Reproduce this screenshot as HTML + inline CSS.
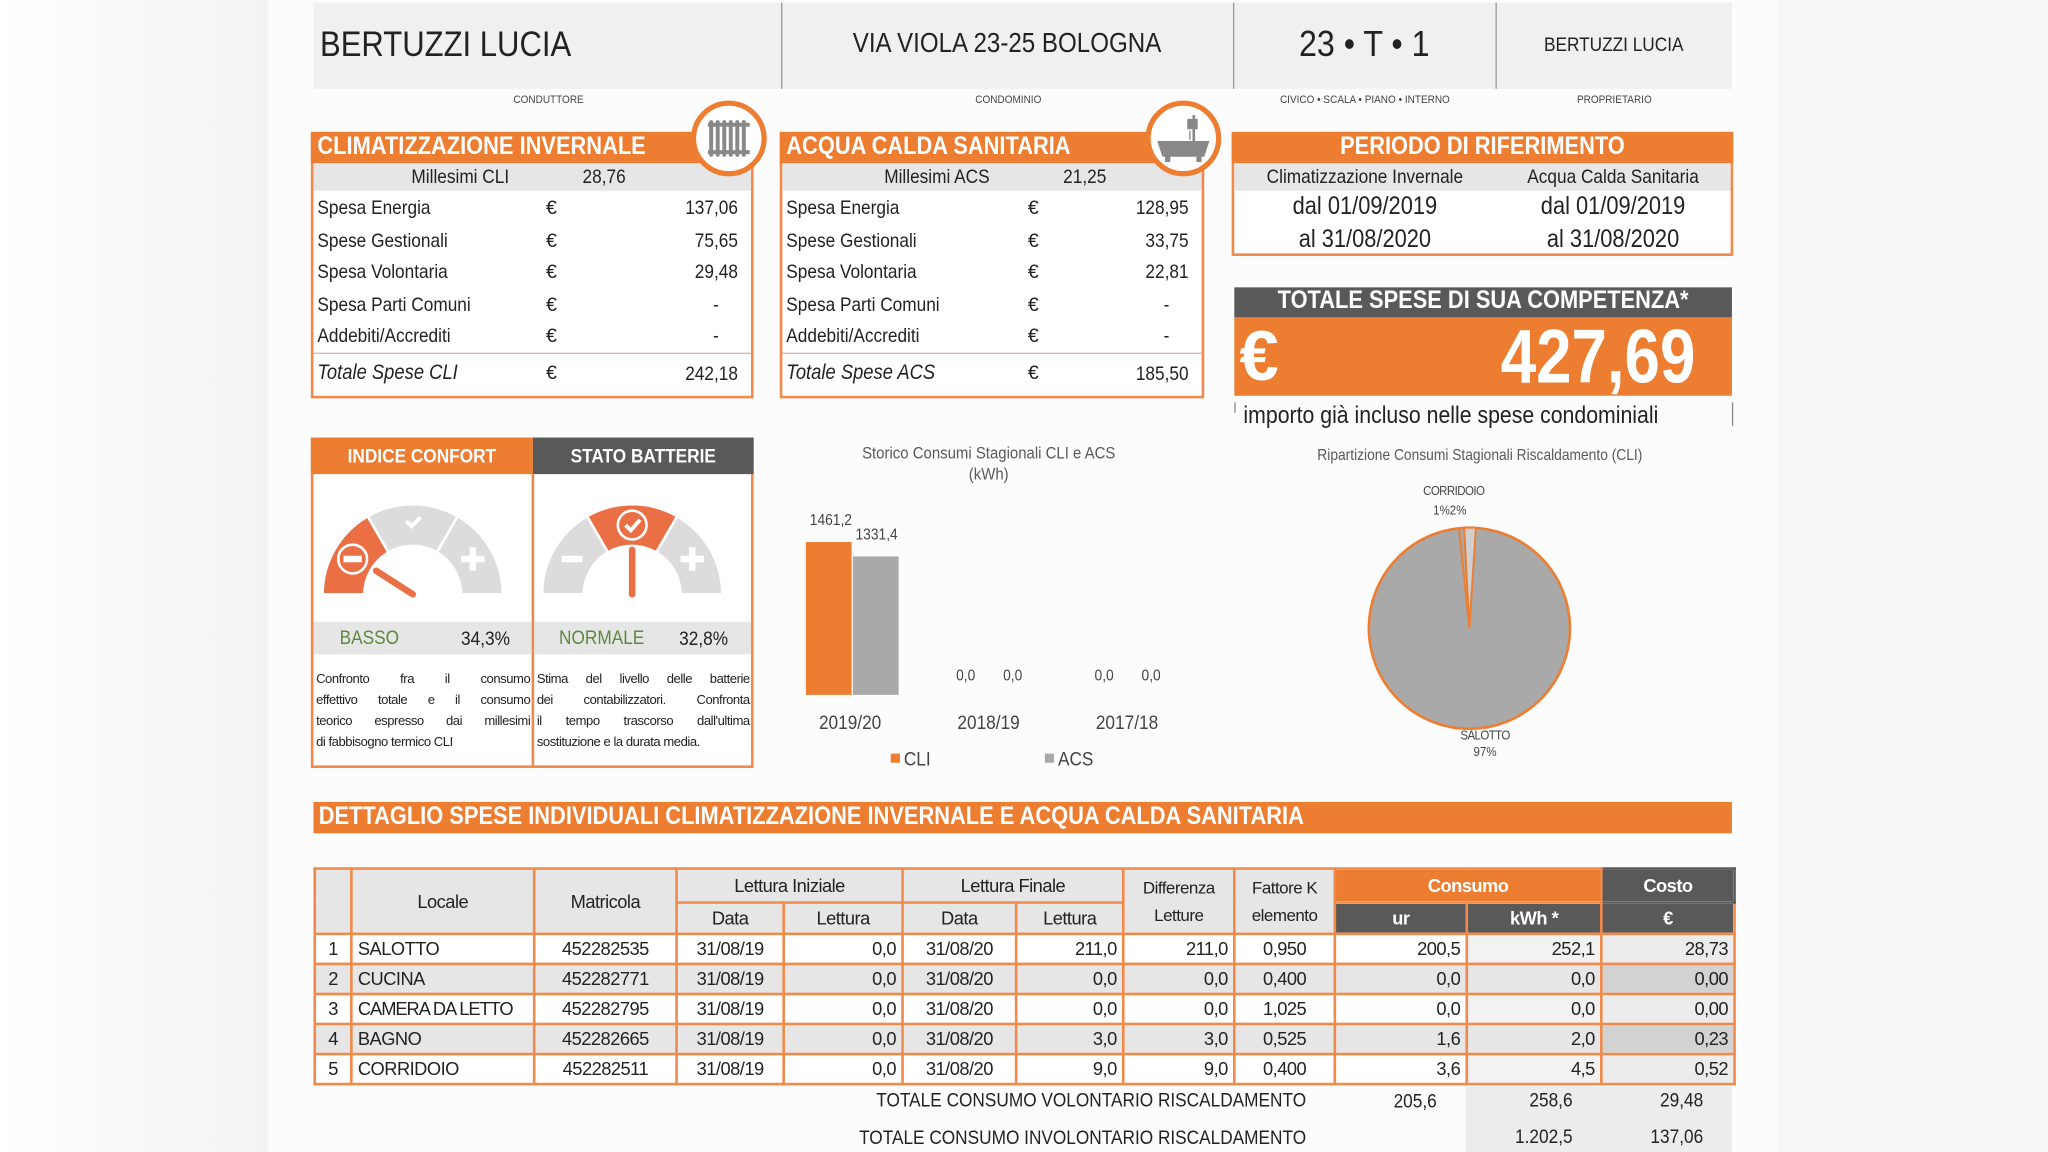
<!DOCTYPE html>
<html><head><meta charset="utf-8"><style>
*{margin:0;padding:0;box-sizing:border-box}
html,body{width:2048px;height:1152px;overflow:hidden;background:#fff}
#s{position:absolute;left:0;top:0;width:1568px;height:882px;transform:scale(1.306122);transform-origin:0 0;font-family:"Liberation Sans Narrow","Liberation Sans",sans-serif;color:#222;background:linear-gradient(90deg,#fff 0,#f3f3f3 205px,#fcfcfc 206px,#fcfcfc 1360px,#f6f6f6 1361px)}
.a{position:absolute;white-space:nowrap}
.c{text-align:center}
.r{text-align:right}
.t{transform:scaleX(.88);transform-origin:0 50%}
.tc{transform:scaleX(.88);transform-origin:50% 50%}
.tr{transform:scaleX(.88);transform-origin:100% 50%}
.or{background:#ed7d31}
.dk{background:#595959}
.w{color:#fff;font-weight:bold}
.box{position:absolute;border:2px solid #f08a4b;background:#fff}
.lab{font-size:8.5px;color:#444;width:200px;text-align:center;transform:scaleX(.9)}
.desc{position:absolute;font-size:10px;line-height:16px;letter-spacing:-0.35px}
.desc div{white-space:nowrap;text-align:justify;text-align-last:justify}
.desc div.l{text-align-last:left}
table{border-collapse:collapse;position:absolute;left:240px;top:664px;font-size:14px;table-layout:fixed;width:1087px;letter-spacing:-0.4px}
td{border:2px solid #f08a4b;height:23px;line-height:19px;padding:0 4px;white-space:nowrap;overflow:hidden}
</style></head><body><div id="s">
<div class="a" style="left:240px;top:2px;width:1086px;height:66px;background:#f0f0f0"></div>
<div class="a" style="left:598px;top:2px;width:1px;height:66px;background:#999"></div>
<div class="a" style="left:944px;top:2px;width:1px;height:66px;background:#999"></div>
<div class="a" style="left:1145px;top:2px;width:1px;height:66px;background:#999"></div>
<div class="a t" style="left:245px;top:19px;font-size:27px">BERTUZZI LUCIA</div>
<div class="a c tc" style="left:598px;top:22px;width:346px;font-size:21px">VIA VIOLA 23-25 BOLOGNA</div>
<div class="a c tc" style="left:944px;top:18px;width:201px;font-size:28px">23 • T • 1</div>
<div class="a c tc" style="left:1145px;top:26px;width:181px;font-size:15px">BERTUZZI LUCIA</div>
<div class="a lab" style="left:320px;top:71px">CONDUTTORE</div>
<div class="a lab" style="left:672px;top:71px">CONDOMINIO</div>
<div class="a lab" style="left:945px;top:71px">CIVICO • SCALA • PIANO • INTERNO</div>
<div class="a lab" style="left:1136px;top:71px">PROPRIETARIO</div>

<div class="box" style="left:238px;top:101px;width:339px;height:204px"></div>
<div class="a or" style="left:238px;top:101px;width:339px;height:24px"></div>
<div class="a w t" style="left:243px;top:102px;font-size:19px">CLIMATIZZAZIONE INVERNALE</div>
<div class="a" style="left:240px;top:125px;width:335px;height:21px;background:#e6e6e6"></div>
<div class="a t" style="left:315px;top:127px;font-size:15px">Millesimi CLI</div>
<div class="a t" style="left:446px;top:127px;font-size:15px">28,76</div>
<div class="a t" style="left:243px;top:148px;font-size:15px;line-height:24.5px">Spesa Energia<br>Spese Gestionali<br>Spesa Volontaria<br>Spesa Parti Comuni<br>Addebiti/Accrediti</div>
<div class="a" style="left:418px;top:148px;font-size:15px;line-height:24.5px">€<br>€<br>€<br>€<br>€</div>
<div class="a r tr" style="left:465px;top:148px;width:100px;font-size:15px;line-height:24.5px">137,06<br>75,65<br>29,48<br>-&nbsp;&nbsp;&nbsp;&nbsp;<br>-&nbsp;&nbsp;&nbsp;&nbsp;</div>
<div class="a" style="left:240px;top:270px;width:335px;height:1px;background:#e0b0a0"></div>
<div class="a t" style="left:243px;top:277px;font-size:16px;font-style:italic">Totale Spese CLI</div>
<div class="a" style="left:418px;top:277px;font-size:15px">€</div>
<div class="a r tr" style="left:465px;top:278px;width:100px;font-size:15px">242,18</div>
<svg class="a" style="left:527px;top:75px" width="62" height="62" viewBox="0 0 62 62"><circle cx="31" cy="31" r="27" fill="#fff" stroke="#ed7d31" stroke-width="4"/><g fill="#888"><rect x="15" y="19" width="32" height="3"/><rect x="15" y="40" width="32" height="3"/><rect x="16" y="17" width="3" height="28" rx="1.5"/><rect x="21" y="17" width="3" height="28" rx="1.5"/><rect x="26" y="17" width="3" height="28" rx="1.5"/><rect x="31" y="17" width="3" height="28" rx="1.5"/><rect x="36" y="17" width="3" height="28" rx="1.5"/><rect x="41" y="17" width="3" height="28" rx="1.5"/></g></svg>

<div class="box" style="left:597px;top:101px;width:325px;height:204px"></div>
<div class="a or" style="left:597px;top:101px;width:325px;height:24px"></div>
<div class="a w t" style="left:602px;top:102px;font-size:19px">ACQUA CALDA SANITARIA</div>
<div class="a" style="left:599px;top:125px;width:321px;height:21px;background:#e6e6e6"></div>
<div class="a t" style="left:677px;top:127px;font-size:15px">Millesimi ACS</div>
<div class="a t" style="left:814px;top:127px;font-size:15px">21,25</div>
<div class="a t" style="left:602px;top:148px;font-size:15px;line-height:24.5px">Spesa Energia<br>Spese Gestionali<br>Spesa Volontaria<br>Spesa Parti Comuni<br>Addebiti/Accrediti</div>
<div class="a" style="left:787px;top:148px;font-size:15px;line-height:24.5px">€<br>€<br>€<br>€<br>€</div>
<div class="a r tr" style="left:810px;top:148px;width:100px;font-size:15px;line-height:24.5px">128,95<br>33,75<br>22,81<br>-&nbsp;&nbsp;&nbsp;&nbsp;<br>-&nbsp;&nbsp;&nbsp;&nbsp;</div>
<div class="a" style="left:599px;top:270px;width:321px;height:1px;background:#e0b0a0"></div>
<div class="a t" style="left:602px;top:277px;font-size:16px;font-style:italic">Totale Spese ACS</div>
<div class="a" style="left:787px;top:277px;font-size:15px">€</div>
<div class="a r tr" style="left:810px;top:278px;width:100px;font-size:15px">185,50</div>
<svg class="a" style="left:875px;top:75px" width="62" height="62" viewBox="0 0 62 62"><circle cx="31" cy="31" r="27" fill="#fff" stroke="#ed7d31" stroke-width="4"/><g fill="#888"><path d="M11 33 H51 L47 45 H15 Z"/><rect x="17" y="44" width="4" height="5"/><rect x="41" y="44" width="4" height="5"/><rect x="38" y="13" width="2" height="22"/><path d="M34 16 h8 v8 h-8z"/></g><g stroke="#888" stroke-width="1"><line x1="36" y1="25" x2="36" y2="32"/><line x1="39" y1="25" x2="39" y2="32"/></g></svg>

<div class="box" style="left:943px;top:101px;width:384px;height:95px"></div>
<div class="a or" style="left:943px;top:101px;width:384px;height:24px"></div>
<div class="a w c tc" style="left:943px;top:102px;width:384px;font-size:19px">PERIODO DI RIFERIMENTO</div>
<div class="a" style="left:945px;top:125px;width:380px;height:21px;background:#e6e6e6"></div>
<div class="a c tc" style="left:945px;top:127px;width:200px;font-size:15px">Climatizzazione Invernale</div>
<div class="a c tc" style="left:1135px;top:127px;width:200px;font-size:15px">Acqua Calda Sanitaria</div>
<div class="a c tc" style="left:945px;top:146px;width:200px;font-size:19px;line-height:25px">dal 01/09/2019<br>al 31/08/2020</div>
<div class="a c tc" style="left:1135px;top:146px;width:200px;font-size:19px;line-height:25px">dal 01/09/2019<br>al 31/08/2020</div>

<div class="a dk" style="left:945px;top:220px;width:381px;height:23px"></div>
<div class="a w c tc" style="left:945px;top:220px;width:381px;font-size:19px">TOTALE SPESE DI SUA COMPETENZA*</div>
<div class="a or" style="left:945px;top:243px;width:381px;height:60px"></div>
<div class="a w" style="left:949px;top:242px;font-size:54px">€</div>
<div class="a w r" style="left:1050px;top:240px;width:248px;font-size:58px;transform:scaleX(.84);transform-origin:100% 50%">427,69</div>
<div class="a" style="left:945px;top:308px;width:1px;height:8px;background:#888"></div>
<div class="a t" style="left:952px;top:307px;font-size:18.5px">importo già incluso nelle spese condominiali</div>
<div class="a" style="left:1326px;top:308px;width:1px;height:18px;background:#888"></div>

<div class="box" style="left:238px;top:335px;width:339px;height:253px"></div>
<div class="a or" style="left:238px;top:335px;width:170px;height:28px"></div>
<div class="a dk" style="left:408px;top:335px;width:169px;height:28px"></div>
<div class="a w c tc" style="left:238px;top:341px;width:170px;font-size:15px">INDICE CONFORT</div>
<div class="a w c tc" style="left:408px;top:341px;width:169px;font-size:15px">STATO BATTERIE</div>
<div class="a" style="left:407px;top:363px;width:2px;height:225px;background:#f08a4b"></div>
<div class="a" style="left:240px;top:476px;width:167px;height:25px;background:#e6e6e6"></div>
<div class="a" style="left:409px;top:476px;width:166px;height:25px;background:#e6e6e6"></div>
<div class="a t" style="left:260px;top:480px;font-size:15px;color:#5b8a3c">BASSO</div>
<div class="a t" style="left:353px;top:481px;font-size:15px">34,3%</div>
<div class="a t" style="left:428px;top:480px;font-size:15px;color:#5b8a3c">NORMALE</div>
<div class="a t" style="left:520px;top:481px;font-size:15px">32,8%</div>
<svg class="a" style="left:236px;top:375px" width="160" height="90" viewBox="-80 -80 160 90">
<g stroke="#fff" stroke-width="2">
<path d="M-69 0 A69 69 0 0 1 -34.5 -59.76 L-18.5 -32.04 A37 37 0 0 0 -37 0Z" fill="#ea6f45"/>
<path d="M-34.5 -59.76 A69 69 0 0 1 34.5 -59.76 L18.5 -32.04 A37 37 0 0 0 -18.5 -32.04Z" fill="#dcdcdc"/>
<path d="M34.5 -59.76 A69 69 0 0 1 69 0 L37 0 A37 37 0 0 0 18.5 -32.04Z" fill="#dcdcdc"/></g>
<circle cx="-46" cy="-27" r="11" fill="none" stroke="#fff" stroke-width="2"/><rect x="-53" y="-29.5" width="14" height="5" fill="#fff"/>
<path d="M-5 -56 L-1 -52 L6 -59" fill="none" stroke="#fff" stroke-width="3"/>
<path d="M46 -36 V-18 M37 -27 H55" stroke="#fff" stroke-width="5"/>
<line x1="-28" y1="-18" x2="0" y2="0" stroke="#ea6f45" stroke-width="5" stroke-linecap="round"/>
</svg>
<svg class="a" style="left:404px;top:375px" width="160" height="90" viewBox="-80 -80 160 90">
<g stroke="#fff" stroke-width="2">
<path d="M-69 0 A69 69 0 0 1 -34.5 -59.76 L-18.5 -32.04 A37 37 0 0 0 -37 0Z" fill="#dcdcdc"/>
<path d="M-34.5 -59.76 A69 69 0 0 1 34.5 -59.76 L18.5 -32.04 A37 37 0 0 0 -18.5 -32.04Z" fill="#ea6f45"/>
<path d="M34.5 -59.76 A69 69 0 0 1 69 0 L37 0 A37 37 0 0 0 18.5 -32.04Z" fill="#dcdcdc"/></g>
<circle cx="0" cy="-53" r="11" fill="none" stroke="#fff" stroke-width="2"/>
<path d="M-5 -53 L-1 -49 L6 -57" fill="none" stroke="#fff" stroke-width="3"/>
<path d="M-54 -27 H-38" stroke="#fff" stroke-width="5"/>
<path d="M46 -36 V-18 M37 -27 H55" stroke="#fff" stroke-width="5"/>
<line x1="0" y1="-34" x2="0" y2="0" stroke="#ea6f45" stroke-width="5" stroke-linecap="round"/>
</svg>
<div class="desc" style="left:242px;top:513px;width:164px"><div>Confronto fra il consumo</div><div>effettivo totale e il consumo</div><div>teorico espresso dai millesimi</div><div class="l">di fabbisogno termico CLI</div></div>
<div class="desc" style="left:411px;top:513px;width:163px"><div>Stima del livello delle batterie</div><div>dei contabilizzatori. Confronta</div><div>il tempo trascorso dall'ultima</div><div class="l">sostituzione e la durata media.</div></div>

<div class="a c tc" style="left:607px;top:339px;width:300px;font-size:13px;color:#595959;line-height:16px">Storico Consumi Stagionali CLI e ACS<br>(kWh)</div>
<div class="a" style="left:617px;top:415px;width:35px;height:117px;background:#ed7d31"></div>
<div class="a" style="left:653px;top:426px;width:35px;height:106px;background:#a9a9a9"></div>
<div class="a t" style="left:620px;top:391px;font-size:12px;color:#444">1461,2</div>
<div class="a t" style="left:655px;top:402px;font-size:12px;color:#444">1331,4</div>
<div class="a t" style="left:732px;top:510px;font-size:12px;color:#444">0,0</div>
<div class="a t" style="left:768px;top:510px;font-size:12px;color:#444">0,0</div>
<div class="a t" style="left:838px;top:510px;font-size:12px;color:#444">0,0</div>
<div class="a t" style="left:874px;top:510px;font-size:12px;color:#444">0,0</div>
<div class="a t" style="left:627px;top:545px;font-size:15px;color:#444">2019/20</div>
<div class="a t" style="left:733px;top:545px;font-size:15px;color:#444">2018/19</div>
<div class="a t" style="left:839px;top:545px;font-size:15px;color:#444">2017/18</div>
<div class="a" style="left:682px;top:577px;width:7px;height:7px;background:#ed7d31"></div>
<div class="a t" style="left:692px;top:573px;font-size:15px;color:#444">CLI</div>
<div class="a" style="left:800px;top:577px;width:7px;height:7px;background:#a9a9a9"></div>
<div class="a t" style="left:810px;top:573px;font-size:15px;color:#444">ACS</div>

<div class="a c tc" style="left:983px;top:341px;width:300px;font-size:12px;color:#595959">Ripartizione Consumi Stagionali Riscaldamento (CLI)</div>
<svg class="a" style="left:1040px;top:396px" width="170" height="170" viewBox="-85 -85 170 170">
<circle r="77" fill="#a9a9a9" stroke="#ed7d31" stroke-width="2"/>
<path d="M0 0 L-4 -77 L5 -77 Z" fill="#d0d0d0" stroke="#ed7d31" stroke-width="1.5"/>
<line x1="0" y1="0" x2="-8" y2="-77" stroke="#ed7d31" stroke-width="1.5"/>
</svg>
<div class="a c tc" style="left:1073px;top:371px;width:80px;font-size:10px;color:#444;letter-spacing:-0.5px">CORRIDOIO</div>
<div class="a c tc" style="left:1070px;top:386px;width:80px;font-size:10px;color:#444">1%2%</div>
<div class="a c tc" style="left:1097px;top:558px;width:80px;font-size:10px;color:#444;letter-spacing:-0.5px">SALOTTO</div>
<div class="a c tc" style="left:1097px;top:571px;width:80px;font-size:10px;color:#444">97%</div>

<div class="a or" style="left:240px;top:614px;width:1086px;height:24px"></div>
<div class="a w t" style="left:244px;top:615px;font-size:19px">DETTAGLIO SPESE INDIVIDUALI CLIMATIZZAZIONE INVERNALE E ACQUA CALDA SANITARIA</div>

<table>
<colgroup><col style="width:28px"><col style="width:140px"><col style="width:109px"><col style="width:82px"><col style="width:91px"><col style="width:87px"><col style="width:82px"><col style="width:85px"><col style="width:77px"><col style="width:101px"><col style="width:103px"><col style="width:102px"></colgroup>
<tr style="background:#e6e6e6;text-align:center">
<td rowspan="2"></td><td rowspan="2">Locale</td><td rowspan="2">Matricola</td><td colspan="2" style="height:26px">Lettura Iniziale</td><td colspan="2">Lettura Finale</td><td rowspan="2" style="font-size:13px;line-height:21px">Differenza<br>Letture</td><td rowspan="2" style="font-size:13px;line-height:21px">Fattore K<br>elemento</td><td colspan="2" style="background:#ed7d31;color:#fff;font-weight:bold">Consumo</td><td style="background:#595959;color:#fff;font-weight:bold;border-color:#595959">Costo</td></tr>
<tr style="background:#e6e6e6;text-align:center"><td style="height:24px">Data</td><td>Lettura</td><td>Data</td><td>Lettura</td><td style="background:#595959;color:#fff;font-weight:bold">ur</td><td style="background:#595959;color:#fff;font-weight:bold">kWh *</td><td style="background:#595959;color:#fff;font-weight:bold">€</td></tr>
<tr style="background:#fff"><td class="c">1</td><td>SALOTTO</td><td class="c">452282535</td><td class="c">31/08/19</td><td class="r">0,0</td><td class="c">31/08/20</td><td class="r">211,0</td><td class="r">211,0</td><td class="c">0,950</td><td class="r">200,5</td><td class="r" style="background:#f2f2f2">252,1</td><td class="r" style="background:#ececec">28,73</td></tr>
<tr style="background:#e6e6e6"><td class="c">2</td><td>CUCINA</td><td class="c">452282771</td><td class="c">31/08/19</td><td class="r">0,0</td><td class="c">31/08/20</td><td class="r">0,0</td><td class="r">0,0</td><td class="c">0,400</td><td class="r">0,0</td><td class="r">0,0</td><td class="r" style="background:#d2d2d2">0,00</td></tr>
<tr style="background:#fff"><td class="c">3</td><td style="letter-spacing:-0.8px">CAMERA DA LETTO</td><td class="c">452282795</td><td class="c">31/08/19</td><td class="r">0,0</td><td class="c">31/08/20</td><td class="r">0,0</td><td class="r">0,0</td><td class="c">1,025</td><td class="r">0,0</td><td class="r" style="background:#f2f2f2">0,0</td><td class="r" style="background:#ececec">0,00</td></tr>
<tr style="background:#e6e6e6"><td class="c">4</td><td>BAGNO</td><td class="c">452282665</td><td class="c">31/08/19</td><td class="r">0,0</td><td class="c">31/08/20</td><td class="r">3,0</td><td class="r">3,0</td><td class="c">0,525</td><td class="r">1,6</td><td class="r">2,0</td><td class="r" style="background:#d2d2d2">0,23</td></tr>
<tr style="background:#fff"><td class="c">5</td><td>CORRIDOIO</td><td class="c">452282511</td><td class="c">31/08/19</td><td class="r">0,0</td><td class="c">31/08/20</td><td class="r">9,0</td><td class="r">9,0</td><td class="c">0,400</td><td class="r">3,6</td><td class="r" style="background:#f2f2f2">4,5</td><td class="r" style="background:#ececec">0,52</td></tr>
</table>
<div class="a" style="left:1122px;top:832px;width:204px;height:50px;background:#ececec"></div>
<div class="a r tr" style="left:600px;top:834px;width:400px;font-size:15px">TOTALE CONSUMO VOLONTARIO RISCALDAMENTO</div>
<div class="a r tr" style="left:1000px;top:835px;width:100px;font-size:15px">205,6</div>
<div class="a r tr" style="left:1100px;top:834px;width:104px;font-size:15px">258,6</div>
<div class="a r tr" style="left:1200px;top:834px;width:104px;font-size:15px">29,48</div>
<div class="a r tr" style="left:600px;top:863px;width:400px;font-size:15px">TOTALE CONSUMO INVOLONTARIO RISCALDAMENTO</div>
<div class="a r tr" style="left:1100px;top:862px;width:104px;font-size:15px">1.202,5</div>
<div class="a r tr" style="left:1200px;top:862px;width:104px;font-size:15px">137,06</div>
</div></body></html>
